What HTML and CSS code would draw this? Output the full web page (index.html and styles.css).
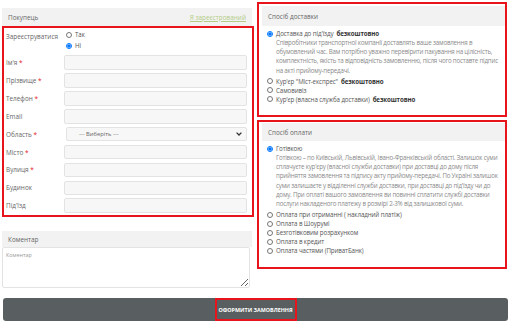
FILE: index.html
```html
<!DOCTYPE html>
<html lang="uk">
<head>
  <meta charset="UTF-8" />
  <title>Оформлення замовлення</title>
  <link rel="stylesheet" href="styles.css">
</head>
<body>
<main class="checkout">
  <div class="col col-left">
    <div class="panel-head">
      <span>Покупець</span>
      <a href="#" class="login-link">Я зареєстрований</a>
    </div>
    <div class="mark customer">
      <div class="row row-radio">
        <label class="lbl">Зареєструватися</label>
        <div class="radios">
          <label class="opt"><input type="radio" name="reg"> Так</label>
          <label class="opt"><input type="radio" name="reg" checked> Ні</label>
        </div>
      </div>
      <div class="row"><label class="lbl">Ім'я <i>*</i></label><input class="field" type="text"></div>
      <div class="row"><label class="lbl">Прізвище <i>*</i></label><input class="field" type="text"></div>
      <div class="row"><label class="lbl">Телефон <i>*</i></label><input class="field" type="text"></div>
      <div class="row"><label class="lbl">Email</label><input class="field" type="text"></div>
      <div class="row"><label class="lbl">Область <i>*</i></label>
        <div class="field select"><span>--- Виберіть ---</span>
          <svg width="6" height="4" viewBox="0 0 6 4"><path d="M0.6 0.6 L3 3 L5.4 0.6" fill="none" stroke="#333" stroke-width="1.3"/></svg>
        </div>
      </div>
      <div class="row"><label class="lbl">Місто <i>*</i></label><input class="field" type="text"></div>
      <div class="row"><label class="lbl">Вулиця <i>*</i></label><input class="field" type="text"></div>
      <div class="row"><label class="lbl">Будинок</label><input class="field" type="text"></div>
      <div class="row"><label class="lbl">Під'їзд</label><input class="field" type="text"></div>
    </div>

    <div class="comment">
      <div class="panel-head">Коментар</div>
      <textarea class="comment-box" placeholder="Коментар"></textarea>
    </div>
  </div>

  <div class="col col-right">
    <div class="mark delivery">
      <div class="panel-head">Спосіб доставки</div>
      <div class="choices">
        <label class="opt"><input type="radio" name="del" checked> Доставка до під'їзду <b>безкоштовно</b></label>
        <p class="desc">Співробітники транспортної компанії доставлять ваше замовлення в обумовлений час. Вам потрібно уважно перевірити пакування на цілісність, комплектність, якість та відповідність замовленню, після чого поставте підпис на акті прийому-передачі.</p>
        <label class="opt"><input type="radio" name="del"> Кур'єр "Міст-експрес" <b>безкоштовно</b></label>
        <label class="opt"><input type="radio" name="del"> Самовивіз</label>
        <label class="opt"><input type="radio" name="del"> Кур'єр (власна служба доставки) <b>безкоштовно</b></label>
      </div>
    </div>

    <div class="mark payment">
      <div class="panel-head">Спосіб оплати</div>
      <div class="choices">
        <label class="opt"><input type="radio" name="pay" checked> Готівкою</label>
        <p class="desc">Готівкою – по Київській, Львівській, Івано-Франківській області. Залишок суми сплачуєте кур'єру (власної служби доставки) при доставці до дому після прийняття замовлення та підпису акту прийому-передачі. По Україні залишок суми залишаєте у відділенні служби доставки, при доставці до під'їзду чи до дому. При оплаті вашого замовлення ви повинні сплатити службі доставки послуги накладеного платежу в розмірі 2-3% від залишкової суми.</p>
        <label class="opt"><input type="radio" name="pay"> Оплата при отриманні ( накладний платіж)</label>
        <label class="opt"><input type="radio" name="pay"> Оплата в Шоурумі</label>
        <label class="opt"><input type="radio" name="pay"> Безготівковим розрахунком</label>
        <label class="opt"><input type="radio" name="pay"> Оплата в кредит</label>
        <label class="opt"><input type="radio" name="pay"> Оплата частями (ПриватБанк)</label>
      </div>
    </div>
  </div>
</main>

<div class="submit-bar">
  <button class="submit-btn"><span>Оформити замовлення</span></button>
</div>
</body>
</html>
```

FILE: styles.css
```css
:root { --text:#555; --muted:#8a8a8a; --head:#f2f2f2; --border:#e3e3e3; --mark:#e8141b; }
* { box-sizing: border-box; }
body { margin:0; width:512px; height:324px; overflow:hidden; font-family:'Open Sans','Noto Sans',sans-serif; font-size:6.2px; color:var(--text); background:#fff; }
.checkout { display:flex; gap:5px; padding:2px 4px 0 2px; height:291px; }
.col-left { width:250px; padding-top:6px; }
.col-right { width:250px; display:flex; flex-direction:column; gap:3px; }
.panel-head { background:var(--head); height:18px; padding:0 6px; display:flex; align-items:center; justify-content:space-between; font-size:6.4px; color:#666; }
.login-link { color:#b3cd86; text-decoration:underline; font-size:6.4px; }
.mark { border:2px solid var(--mark); }
.customer { margin-right:-2px; padding:2px 4px 2px 1px; display:flex; flex-direction:column; gap:3.3px; }
.row { display:flex; align-items:center; height:14.6px; }
.row-radio { height:auto; align-items:flex-start; margin-bottom:2px; }
.lbl { width:61px; padding-left:1px; color:#666; font-size:6.4px; }
.row-radio .lbl { padding-top:2px; }
.lbl i { color:var(--mark); font-style:normal; }
.radios { display:flex; flex-direction:column; gap:2px; }
.field { flex:1; height:100%; background:#f7f7f7; border:1px solid var(--border); border-radius:2px; margin-right:1px; }
.select { display:flex; align-items:center; justify-content:space-between; padding:0 4px 0 12px; color:#666; font-size:5.8px; }
.opt { display:flex; align-items:center; gap:3px; color:#555; font-size:6.2px; line-height:9px; letter-spacing:-0.1px; }
.opt input { margin:0; width:6px; height:6px; }
.opt b { color:#333; }
.comment { margin-top:14px; }
.comment .panel-head { height:16px; }
.comment-box { display:block; width:248px; height:41px; resize:vertical; border:1px solid var(--border); border-radius:2px; font-family:inherit; font-size:5.4px; padding:3px; background:#fff; }
.comment-box::placeholder { color:#9a9a9a; }
.delivery { padding:2px 0 6px 3px; height:115px; }
.delivery .panel-head { height:20px; }
.payment { padding:1px 0 8px 3px; height:149px; }
.choices { padding:3px 2px 0 5px; display:flex; flex-direction:column; }
.desc { margin:0 0 2px 9px; color:var(--muted); font-size:6.2px; line-height:9.2px; letter-spacing:-0.2px; }
.submit-bar { padding:7px 4px 0 3px; }
.submit-btn { width:505px; height:23px; background:#595f60; border:none; border-radius:3px; display:flex; align-items:center; justify-content:center; font-family:inherit; cursor:pointer; padding:0; }
.submit-btn span { border:2px solid var(--mark); height:23px; width:82px; display:flex; align-items:center; justify-content:center; color:#fff; font-weight:700; text-transform:uppercase; font-size:5.4px; }
```
